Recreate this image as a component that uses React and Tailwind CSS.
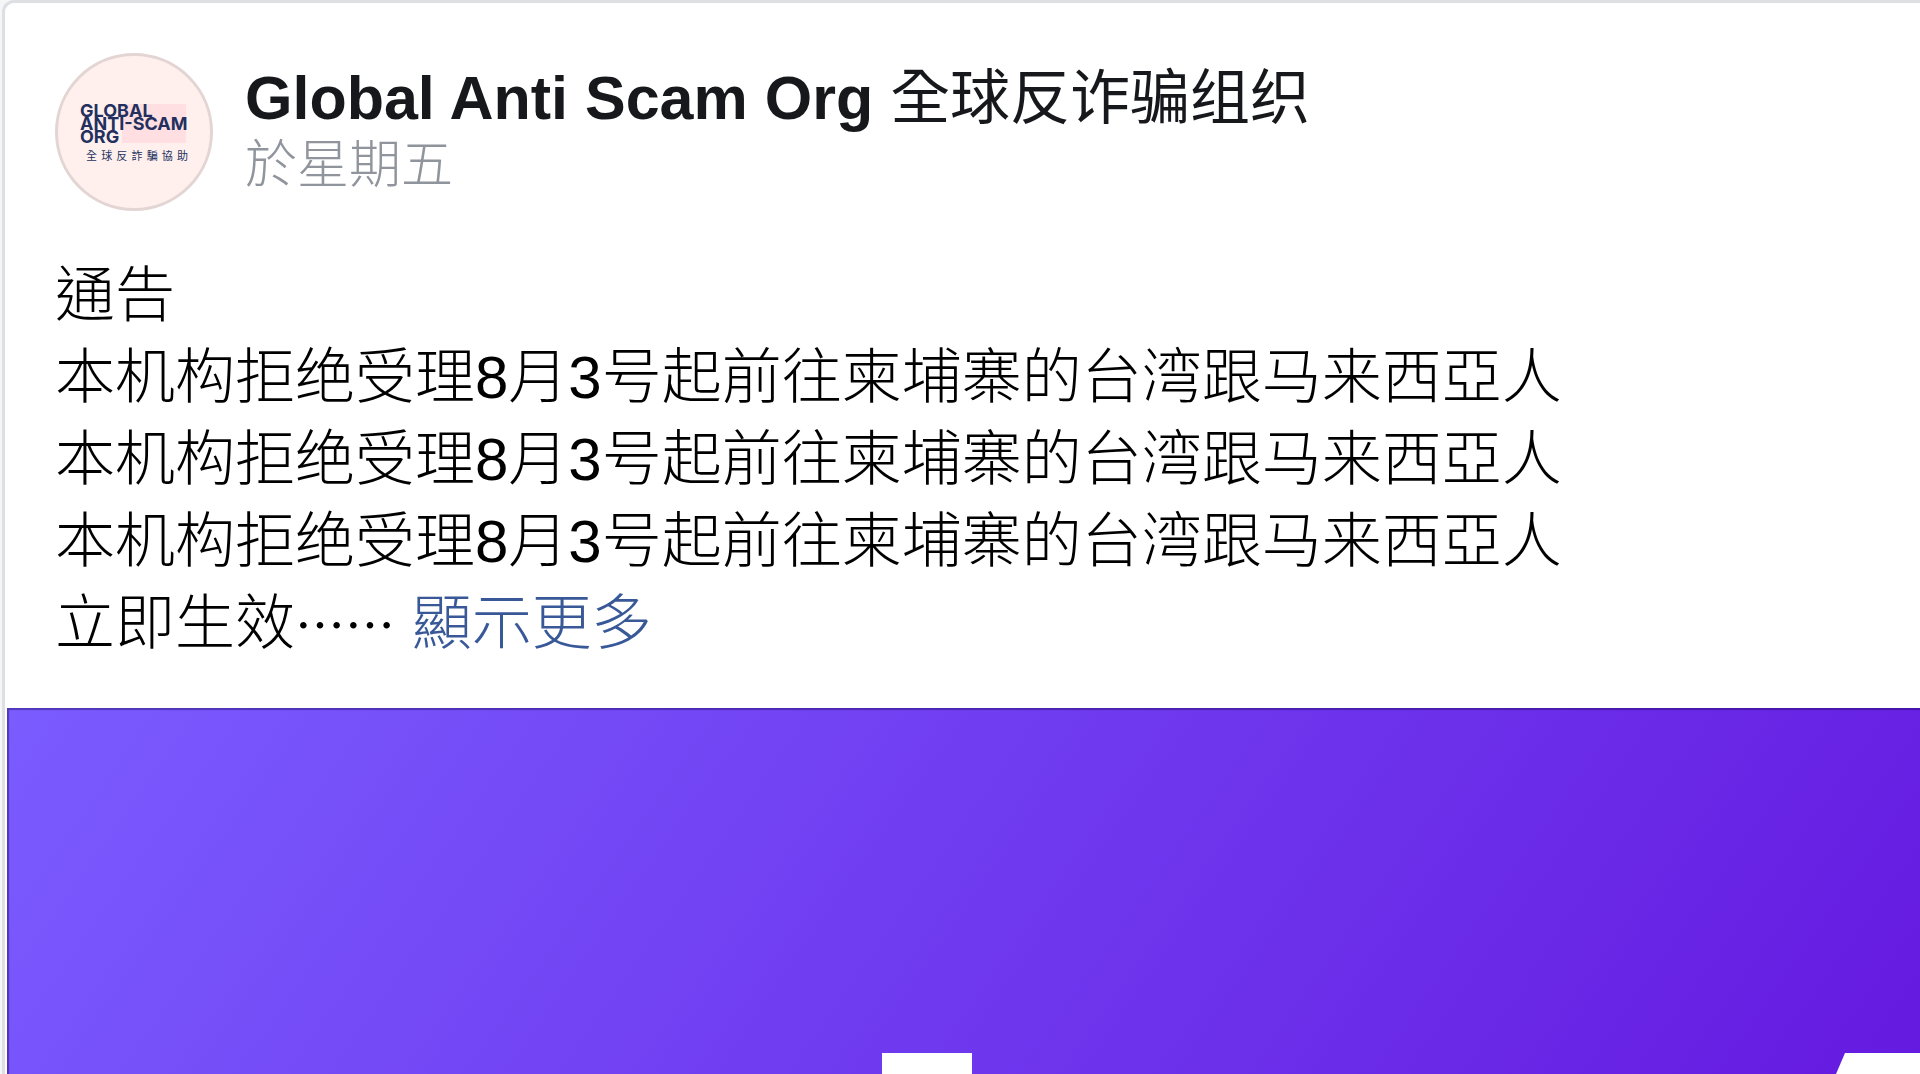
const notice = '本机构拒绝受理8月3号起前往柬埔寨的台湾跟马来西亞人';

function Avatar() {
  return (
    <a
      href="#profile"
      aria-label="Global Anti Scam Org"
      className="flex size-[158px] shrink-0 flex-col rounded-full border-[3px] border-[#e2d5d3] bg-[#fff0ee] pt-12 pl-[22px] font-['Inter'] text-[#23305f]"
    >
      <span className="block w-[106px] bg-linear-to-r from-transparent from-40% to-[#ffdfe1] to-40% text-[18px] leading-[13px] font-bold whitespace-nowrap">
        GLOBAL
        <br />
        ANTI-SCAM
        <br />
        ORG
      </span>
      <span className="mt-1.5 ml-1.5 block w-[102px] font-['Noto_Sans_CJK_TC',sans-serif] text-[11px] leading-3 [text-align-last:justify]">
        全球反詐騙協助
      </span>
    </a>
  );
}

function Cover() {
  return (
    <a
      href="#photo"
      aria-label="Photo"
      className="ml-0.5 flex grow flex-col justify-end bg-linear-[125deg] from-[#7a5cff] to-[#651ae0] shadow-[inset_2px_2px_1px_rgba(20,0,80,0.4)]"
    >
      <svg viewBox="0 0 1913 22" className="block w-full" fill="white" aria-hidden="true">
        <path d="M875 1H965V22H875Z" />
        <path d="M1838 1H1913V22H1829Z" />
      </svg>
    </a>
  );
}

export default function App() {
  return (
    <main className="min-h-screen bg-[#f5f6f7] pl-0.5">
      <article
        lang="zh-Hant"
        className="flex min-h-screen flex-col rounded-tl-xl border-t-[3px] border-l-[3px] border-[#dddfe2] bg-white font-['Liberation_Sans','Noto_Sans_CJK_TC',sans-serif]"
      >
        <header className="flex gap-8 px-[50px] pt-[50px]">
          <Avatar />
          <div className="pt-2.5">
            <h1 className="text-[61px] leading-[70px] font-bold text-[#16181c]">
              <a href="#page">
                Global Anti Scam Org{' '}
                <span className="font-['Noto_Sans_CJK_SC',sans-serif] text-[60px] leading-none font-normal">
                  全球反诈骗组织
                </span>
              </a>
            </h1>
            <p className="text-[52px] leading-[64px] font-light text-[#90949c]">
              <a href="#date">於星期五</a>
            </p>
          </div>
        </header>
        <div className="px-[50px] pt-11 pb-[43px] text-[60px] leading-[82px] font-light text-black">
          <p>通告</p>
          <p>{notice}</p>
          <p>{notice}</p>
          <p>{notice}</p>
          <p>
            立即生效
            <span className="font-['Noto_Sans_CJK_TC',sans-serif] text-[50px] leading-none font-normal">……</span>{' '}
            <a href="#more" className="text-[#385898]">
              顯示更多
            </a>
          </p>
        </div>
        <Cover />
      </article>
    </main>
  );
}
